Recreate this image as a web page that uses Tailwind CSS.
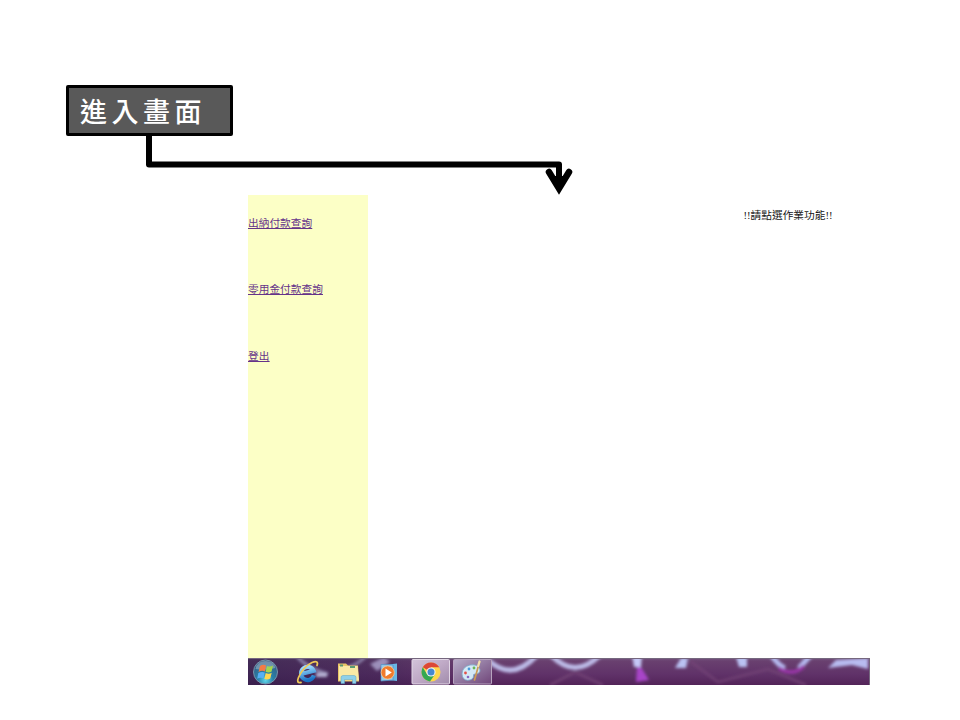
<!DOCTYPE html>
<html lang="zh-Hant">
<head>
<meta charset="utf-8">
<title>進入畫面</title>
<script src="https://cdn.jsdelivr.net/npm/@tailwindcss/browser@4"></script>
</head>
<body class="bg-white">
<main class="relative flex h-[720px] w-[960px] flex-col overflow-hidden bg-white pt-[85px]">
  <h1 class="ml-[66px] flex h-[51px] w-[167px] shrink-0 items-center rounded-[2px] border-3 border-black bg-[#595959] pt-[5px] pl-[11px] font-['Liberation_Serif','Noto_Sans_CJK_TC',sans-serif] text-[27px] leading-none font-medium tracking-[4.500px] whitespace-nowrap text-white">進入畫面</h1>

  <!-- connector from the label to the screen -->
  <svg class="absolute left-0 top-[134px] h-[64px] w-[600px]" viewBox="0 134 600 64" fill="none" stroke="#000" stroke-width="6" stroke-linejoin="round">
    <path d="M149 135V164.500H559V186"/>
    <path d="M549 172L559 188.500L569 172" stroke-width="6.500" stroke-linecap="round" stroke-linejoin="miter"/>
    <path d="M553 176L559 190L565 176Z" fill="#000" stroke="none"/>
  </svg>

  <section class="mt-[59px] ml-[248px] flex h-[490px] w-[622px] shrink-0 flex-col font-['Liberation_Serif','Noto_Sans_CJK_TC',sans-serif] text-[10.7px] leading-[16px]">
    <div class="flex min-h-0 flex-1">
      <nav class="flex w-[120px] flex-col items-start gap-[50.400px] bg-[#fcffc6] pt-[20px] whitespace-nowrap text-[#65338a] underline">
        <a>出納付款查詢</a>
        <a>零用金付款查詢</a>
        <a>登出</a>
      </nav>
      <p class="flex-1 pt-[12px] pl-[375.500px] whitespace-nowrap text-[#151515]">!!請點選作業功能!!</p>
    </div>

    <footer class="h-[27px] shrink-0">
      <svg class="block h-[27px] w-[622px]" viewBox="248 658 622 27">
        <defs>
          <linearGradient id="bar" x2="0" y2="1"><stop offset="0" stop-color="#75547f"/><stop offset=".12" stop-color="#69406f"/><stop offset=".6" stop-color="#603269"/><stop offset="1" stop-color="#532459"/></linearGradient>
          <linearGradient id="dark" x2="1" y2="0"><stop offset="0" stop-color="#291d45" stop-opacity=".6"/><stop offset=".6" stop-color="#35204d" stop-opacity=".45"/><stop offset="1" stop-color="#4b2258" stop-opacity="0"/></linearGradient>
          <linearGradient id="active" x2="1" y2="1"><stop offset="0" stop-color="#d2c4da"/><stop offset=".5" stop-color="#bfa9c6"/><stop offset="1" stop-color="#a18cab"/></linearGradient>
          <linearGradient id="open" x2="1" y2="1"><stop offset="0" stop-color="#b9aeca"/><stop offset=".55" stop-color="#8e739c"/><stop offset="1" stop-color="#704579"/></linearGradient>
          <radialGradient id="orb" cx=".5" cy=".85" r=".8"><stop offset="0" stop-color="#5ed5e9"/><stop offset=".4" stop-color="#2a80a8"/><stop offset="1" stop-color="#345a80"/></radialGradient>
          <linearGradient id="blue" x2="0" y2="1"><stop offset="0" stop-color="#9bdbff"/><stop offset="1" stop-color="#1972c5"/></linearGradient>
          <filter id="soft" filterUnits="userSpaceOnUse" x="240" y="645" width="640" height="50"><feGaussianBlur stdDeviation="1.700"/></filter>
          <clipPath id="edge"><path d="M248 658h622v27H248z"/></clipPath>
        </defs>
        <g clip-path="url(#edge)">
          <path d="M248 658h622v27H248z" fill="url(#bar)"/>
          <path d="M248 658h240v27H248z" fill="url(#dark)"/>
          <g filter="url(#soft)" fill="none">
            <path d="M297 656Q306 668 328 674M365 657Q356 666 345 668" stroke="#8d83ab" stroke-width="3"/>
            <path d="M316 675h11" stroke="#b7b2d4" stroke-width="4"/>
            <path d="M370 664l14-7 6 5-13 9z" fill="#9c8fba"/>
            <path d="M488 660Q512 682 536 656M551 655Q575 680 600 655" stroke="#bdbce8" stroke-width="5"/>
            <path d="M632 655h10l-1 12h-7z" fill="#c5c8f7"/>
            <path d="M637 667h4l8 13-13 2z" fill="#a844c8"/>
            <path d="M675 668l6-10h7l-2 10zM736 657h11v10h-8z" fill="#bac2f3"/>
            <path d="M772 656q7 10 13 12M799 668l11-12" stroke="#b5baf0" stroke-width="5"/>
            <path d="M779 668Q793 677 804 666" stroke="#9b35aa" stroke-width="3.500"/>
            <path d="M828 668l8-8 32-2v11l-16-4z" fill="#b8bcf0"/>
            <path d="M690 661l28 21 50-13 38 16M550 685l25-13 28 13" stroke="#754577" stroke-width="2"/>
          </g>
          <path d="M248 658.500H870M869.500 658v27" stroke="#75677e" fill="none"/>
        </g>

        <!-- start -->
        <circle cx="265.500" cy="672" r="12" fill="url(#orb)" stroke="#7893aa" stroke-width="1"/>
        <path d="M255.500 669Q257 661 265.500 661T275.500 668Q265 671 255.500 669Z" fill="#fff" opacity=".3"/>
        <path d="M260 666q3-2 6-.5l-1 6q-3-1.500-6.500.5z" fill="#f47b45"/>
        <path d="M267 666q3 1.300 6-.5l-1.400 6q-3 1.700-6 .3z" fill="#a3d64c"/>
        <path d="M258.300 673q3.300-1.800 6.500-.5l-1.400 5.800q-3-1.500-6.200.5z" fill="#57aff4"/>
        <path d="M265.700 673q3 1.500 6-.3l-1.400 5.700q-3 1.700-6 .5z" fill="#ffd64e"/>

        <!-- browser -->
        <g transform="rotate(-14 307 672.500)">
          <path d="M313 677a6.600 6.600 0 1 1 .9-4.500H302" fill="none" stroke="url(#blue)" stroke-width="4.200"/>
        </g>
        <path d="M301 682.500q-5 1-2.500-5Q303 667 312 662.500q7-2.500 5 3" fill="none" stroke="#efc957" stroke-width="1.800" stroke-linecap="round"/>

        <!-- folder -->
        <path d="M338 663.500h8l2 2h10l1 16H338z" fill="#e9c568"/>
        <path d="M339 666h18.500l1.500 14.500h-20z" fill="#fae9a5"/>
        <path d="M340 664.500h3v2h-3zM350 666h5v2h-5z" fill="#5b9b73"/>
        <path d="M341 683.500v-6q0-2 2-2h11q2 0 2 2v6h-3.500v-4h-8v4z" fill="#8fd0ea" stroke="#59a5c7" stroke-width=".5"/>

        <!-- media player -->
        <path d="M384 665l13-1.500v17.500l-13-1.500z" fill="#69b7e5"/>
        <path d="M381 664.500l12 .5v15l-12 1z" fill="#98cbe8" stroke="#4d91c7" stroke-width=".7"/>
        <circle cx="387.700" cy="672.500" r="6.600" fill="#f17b2c" stroke="#ffd09b" stroke-width=".7"/>
        <path d="M385.500 668.500l6.300 4-6.300 4z" fill="#fff"/>

        <!-- active window -->
        <rect x="412" y="659.500" width="37.500" height="24.500" rx="1" fill="url(#active)" stroke="#e2d7e6"/>
        <circle cx="431" cy="672" r="9.500" fill="#ffd64b"/>
        <path d="M431 672L422.770 667.250A9.500 9.500 0 0 1 439.230 667.250H431z" fill="#dc4637"/>
        <path d="M422.770 667.250A9.500 9.500 0 0 0 430 681.450L435 674.300 431 672 427 674.300z" fill="#35a853"/>
        <circle cx="431" cy="672" r="4.600" fill="#f5f5f5"/>
        <circle cx="431" cy="672" r="3.500" fill="#4688d0"/>

        <!-- paint -->
        <rect x="453.500" y="659.500" width="38" height="24.500" rx="1" fill="url(#open)" stroke="#b7a4bf"/>
        <path d="M462 674q0-7 8-9 9-1 10 5 0 4-5 4-2 0-1.500 2 0 4-6 4.300-5-.3-5.500-6.300z" fill="#d5e9f6" stroke="#79a9c9" stroke-width=".8"/>
        <circle cx="465.500" cy="673" r="1.400" fill="#e25248"/><circle cx="469" cy="669" r="1.400" fill="#4a9bdc"/><circle cx="474" cy="668" r="1.400" fill="#69b755"/><circle cx="468" cy="677" r="1.300" fill="#8867c2"/>
        <path d="M479.500 662l-5 18" stroke="#cc9b55" stroke-width="1.700" stroke-linecap="round"/>
        <path d="M479.500 661.500l-1.300 4.500" stroke="#f2dfae" stroke-width="2.300" stroke-linecap="round"/>
      </svg>
    </footer>
  </section>
</main>
</body>
</html>
